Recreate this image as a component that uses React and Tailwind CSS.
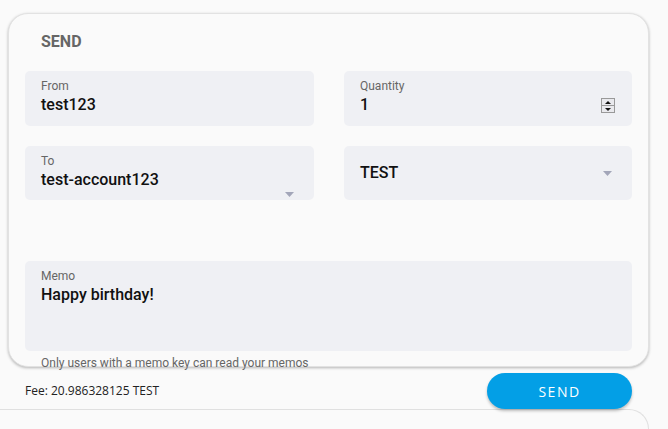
import React from 'react';

const Arrow = ({ className }) => (
  <svg width="9" height="5" viewBox="0 0 9 5" className={className}>
    <path d="M0 0 L9 0 L4.5 5 Z" fill="#a3a6b9" />
  </svg>
);

const Field = ({ label, value, className = '', children }) => (
  <div className={`relative bg-[#eff0f4] rounded-[5px] px-4 pt-[7px] ${className}`}>
    {label && <div className="text-[12px] leading-[16px] text-[#666]">{label}</div>}
    <div className="text-[16px] leading-[20px] mt-[1px] text-[#111] font-medium">{value}</div>
    {children}
  </div>
);

export default function App() {
  return (
    <div
      className="w-[668px] h-[429px] bg-[#fafafa] overflow-hidden"
      style={{ fontFamily: 'Roboto, "Noto Sans", sans-serif' }}
    >
      {/* Send card */}
      <div className="relative ml-[8px] mt-[13px] w-[641px] h-[354px] rounded-[20px] border border-[#e2e2e2] shadow-[0_1px_3px_rgba(0,0,0,0.28)] bg-[#fafafa] px-4">
        <div className="pl-4 pt-[19px] text-[16px] leading-[18px] font-bold text-[#666]">SEND</div>

        <div className="mt-[20px] grid grid-cols-[289px_288px] gap-x-[30px] gap-y-[20px]">
          <Field label="From" value="test123" className="h-[55px]" />
          <Field label="Quantity" value="1" className="h-[55px]">
            <div className="absolute right-[17px] top-[27px] w-[14px] h-[15px] border border-[#999] bg-[#e9e9ed] flex flex-col">
              <div className="flex-1 flex items-center justify-center border-b border-[#999]">
                <svg width="6" height="3" viewBox="0 0 6 3"><path d="M0 3 L6 3 L3 0 Z" fill="#111" /></svg>
              </div>
              <div className="flex-1 flex items-center justify-center">
                <svg width="6" height="3" viewBox="0 0 6 3"><path d="M0 0 L6 0 L3 3 Z" fill="#111" /></svg>
              </div>
            </div>
          </Field>
          <Field label="To" value="test-account123" className="h-[54px]">
            <Arrow className="absolute right-[20px] top-[46px]" />
          </Field>
          <div className="relative h-[54px] bg-[#eff0f4] rounded-[5px] px-4 flex items-center">
            <span className="text-[16px] font-medium text-[#111]">TEST</span>
            <Arrow className="absolute right-[20px] top-[25px]" />
          </div>
        </div>

        <div className="mt-[61px] h-[90px] bg-[#eff0f4] rounded-[5px] px-4 pt-[7px]">
          <div className="text-[12px] leading-[16px] text-[#666]">Memo</div>
          <div className="text-[16px] leading-[20px] mt-[1px] font-medium text-[#111]">Happy birthday!</div>
        </div>
        <div className="absolute left-[32px] top-[342px] text-[12px] leading-[14px] text-[#666]">
          Only users with a memo key can read your memos
        </div>
      </div>

      {/* Footer row */}
      <div className="flex items-center justify-between pl-[25px] pr-[36px] mt-[6px]" style={{ fontFamily: '"Open Sans", sans-serif' }}>
        <span className="text-[12px] text-[#222]">Fee: 20.986328125 TEST</span>
        <button className="w-[145px] h-[36px] rounded-full bg-[#039fe6] text-white text-[14px] tracking-[1.5px] shadow-[0_2px_3px_rgba(0,0,0,0.25)]">
          SEND
        </button>
      </div>

      {/* Next card peek */}
      <div className="w-[649px] h-[40px] rounded-tr-[20px] border-t border-r border-[#e0e0e0]" />
    </div>
  );
}
